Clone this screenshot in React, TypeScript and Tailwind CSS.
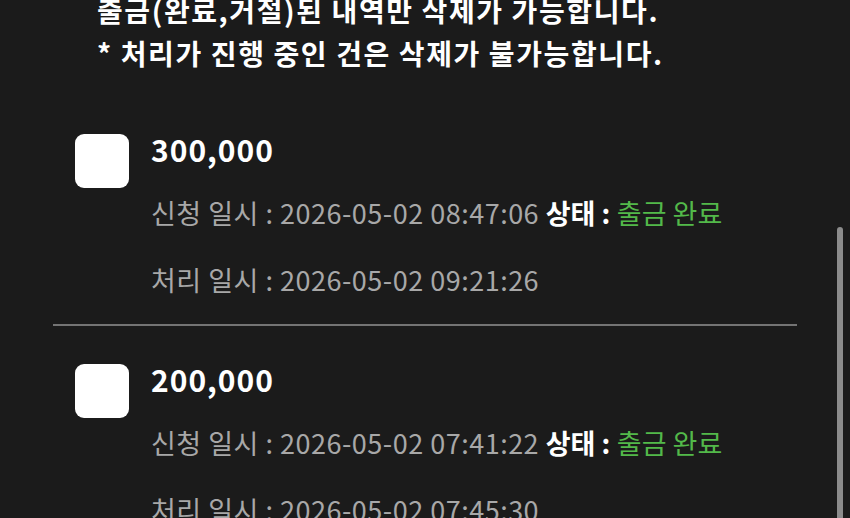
import React from 'react';

const items = [
  { id: 1, amount: '300,000', requested: '2026-05-02 08:47:06', processed: '2026-05-02 09:21:26', status: '출금 완료' },
  { id: 2, amount: '200,000', requested: '2026-05-02 07:41:22', processed: '2026-05-02 07:45:30', status: '출금 완료' },
];

export default function App() {
  return (
    <div
      className="relative h-[518px] w-[850px] overflow-hidden bg-[#1b1b1b] text-white"
      style={{ fontFamily: '"Noto Sans CJK KR", "Noto Sans", sans-serif' }}
    >
      <div className="mt-[-11px] pl-[97px] text-[28px] font-bold leading-[43px] tracking-[1.6px] text-white">
        <p>출금(완료,거절)된 내역만 삭제가 가능합니다.</p>
        <p>* 처리가 진행 중인 건은 삭제가 불가능합니다.</p>
      </div>

      <ul className="mt-[59px]">
        {items.map((it, i) => (
          <li key={it.id}>
            {i > 0 && <div className="mx-[53px] mb-[38px] h-[2px] bg-[#747474]" />}
            <div className="flex gap-[22px] pl-[75px] pb-[11px]">
              <div className="h-[54px] w-[54px] shrink-0 rounded-[9px] bg-white" />
              <div>
                <div className="text-[30px] font-bold leading-[30px] tracking-[1px]">{it.amount}</div>
                <div className="mt-[15px] text-[27px] leading-[67px] tracking-[0.5px] text-[#a8a8a8]">
                  신청 일시 : {it.requested}{' '}
                  <span className="font-bold tracking-normal text-white">상태 :</span>{' '}
                  <span className="tracking-normal text-[#53b94a]">{it.status}</span>
                </div>
                <div className="text-[27px] leading-[67px] tracking-[0.5px] text-[#a8a8a8]">처리 일시 : {it.processed}</div>
              </div>
            </div>
          </li>
        ))}
      </ul>

      <div className="absolute right-[7px] top-[227px] h-[300px] w-[6px] rounded-t-full bg-[#8c8c8c]" />
    </div>
  );
}
